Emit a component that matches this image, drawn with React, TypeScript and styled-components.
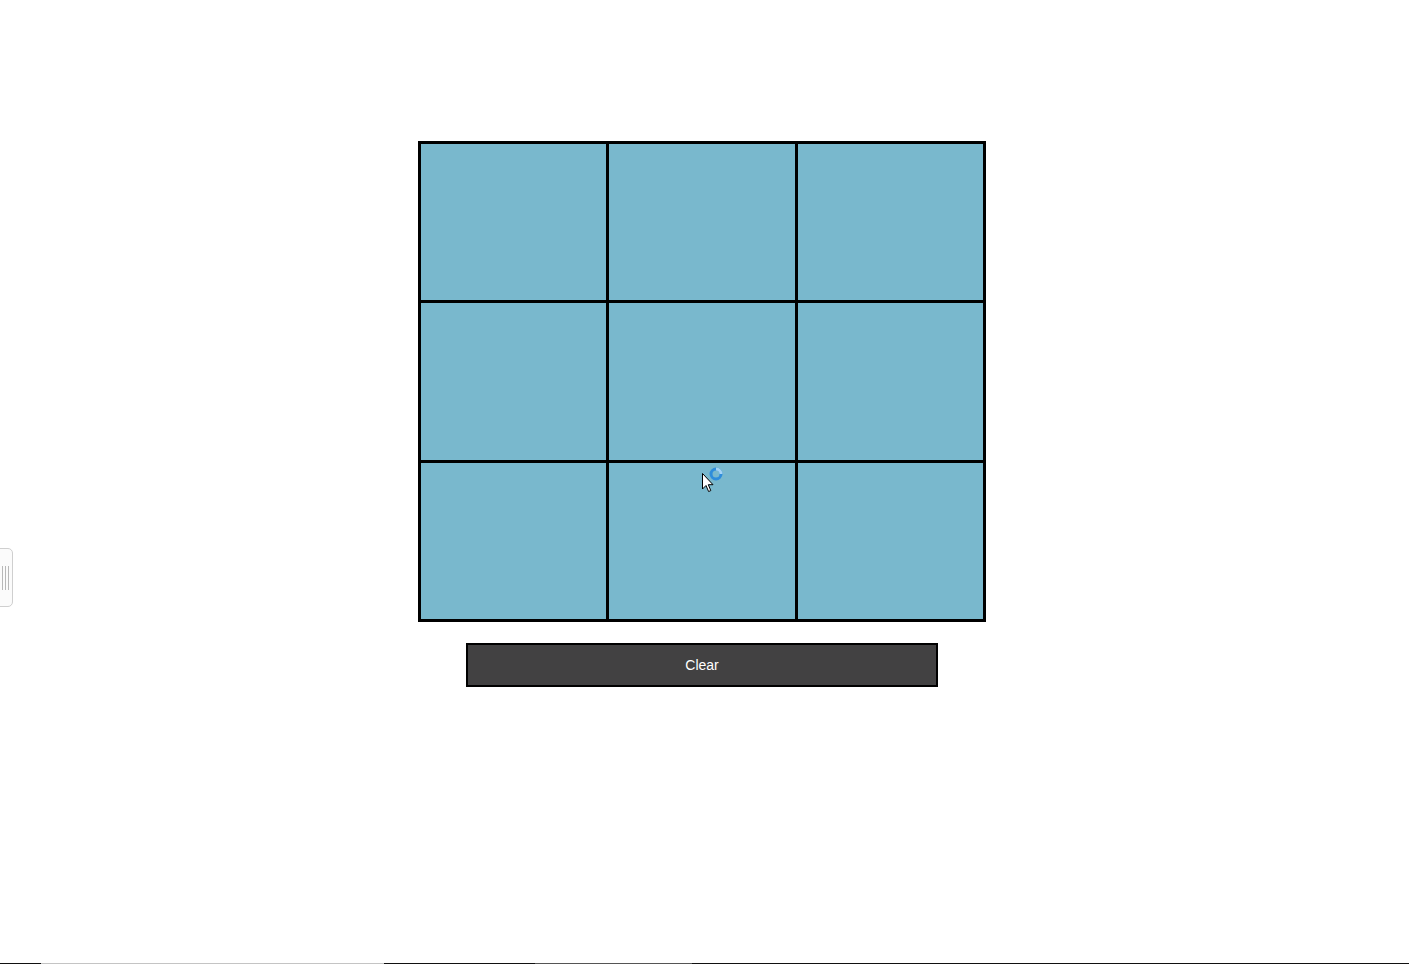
import React, { useState } from "react";
import styled, { createGlobalStyle } from "styled-components";

const Global = createGlobalStyle`
  html, body { margin: 0; padding: 0; background: #ffffff; }
  body { font-family: "Liberation Sans", Arial, sans-serif; overflow: hidden; }
`;

const Page = styled.div`
  position: relative;
  width: 1404px;
  height: 964px;
  display: flex;
  flex-direction: column;
  align-items: center;
  padding-top: 141px;
  box-sizing: border-box;
`;

const Board = styled.div`
  width: 568px;
  height: 481px;
  box-sizing: border-box;
  display: grid;
  grid-template-columns: repeat(3, 1fr);
  grid-template-rows: repeat(3, 1fr);
  gap: 3px;
  padding: 3px;
  background: #000;
`;

const Cell = styled.div`
  background: #79b8cd;
  display: flex;
  align-items: center;
  justify-content: center;
  font-size: 64px;
  color: #222;
`;

const ClearButton = styled.button`
  margin-top: 21px;
  width: 472px;
  height: 44px;
  box-sizing: border-box;
  border: 2px solid #000;
  background: #424142;
  color: #fff;
  font-family: "Liberation Sans", Arial, sans-serif;
  font-size: 14px;
  padding: 0;
  cursor: pointer;
`;

const SideTab = styled.div`
  position: absolute;
  left: -6px;
  top: 548px;
  width: 19px;
  height: 59px;
  box-sizing: border-box;
  background: #fbfbfb;
  border: 1px solid #cfcfcf;
  border-radius: 0 5px 5px 0;
  display: flex;
  gap: 2px;
  align-items: center;
  justify-content: center;
  padding-left: 4px;
`;

const Grip = styled.span`
  width: 1px;
  height: 24px;
  background: #b8b8b8;
`;

const BottomStrip = styled.div`
  position: absolute;
  left: 0;
  bottom: 0;
  width: 1409px;
  height: 1px;
  display: flex;
  background: #111;
`;

const Seg = styled.span<{ $w: number; $c: string }>`
  width: ${(p) => p.$w}px;
  height: 1px;
  background: ${(p) => p.$c};
`;

const Cursor = styled.svg`
  position: absolute;
  left: 700px;
  top: 465px;
  pointer-events: none;
`;

export default function App() {
  const [cells, setCells] = useState<string[]>(Array(9).fill(""));
  const [turn, setTurn] = useState("X");
  const play = (i: number) => {
    if (cells[i]) return;
    const next = cells.slice();
    next[i] = turn;
    setCells(next);
    setTurn(turn === "X" ? "O" : "X");
  };
  return (
    <>
      <Global />
      <Page>
        <Board>
          {cells.map((c, i) => (
            <Cell key={i} onClick={() => play(i)}>
              {c}
            </Cell>
          ))}
        </Board>
        <ClearButton onClick={() => setCells(Array(9).fill(""))}>Clear</ClearButton>
        <SideTab>
          <Grip />
          <Grip />
          <Grip />
        </SideTab>
        <Cursor width="26" height="30" viewBox="0 0 26 30">
          <path d="M2.5 8.5 L2.5 24 L6 20.5 L8.6 26.5 L10.8 25.6 L8.3 19.7 L13 19.7 Z" fill="#fff" stroke="#000" strokeWidth="1" strokeLinejoin="round" />
          <circle cx="16" cy="9" r="5" fill="none" stroke="#2e8ddb" strokeWidth="3" />
          <path d="M16 4 A5 5 0 0 1 21 9" fill="none" stroke="#a5d3f5" strokeWidth="3" />
        </Cursor>
      </Page>
      <BottomStrip>
        <Seg $w={41} $c="#111" />
        <Seg $w={343} $c="#c4c4c4" />
        <Seg $w={151} $c="#111" />
        <Seg $w={157} $c="#555" />
        <Seg $w={717} $c="#111" />
      </BottomStrip>
    </>
  );
}
